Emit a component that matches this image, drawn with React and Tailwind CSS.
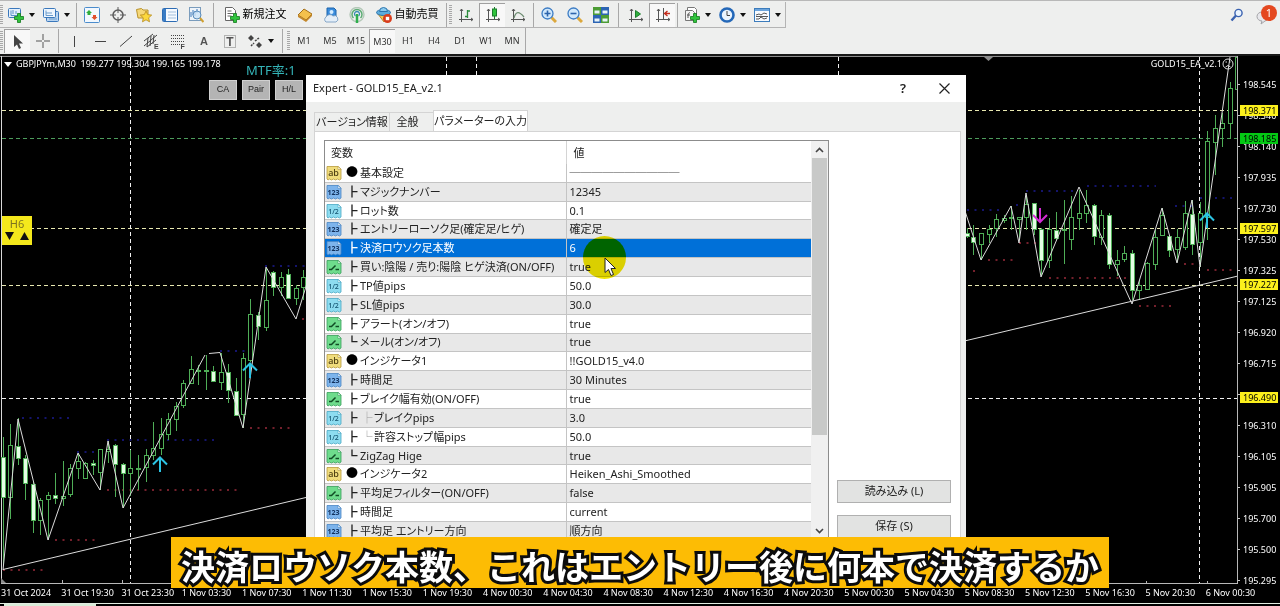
import clsx from 'clsx'

const GREEN = '#4fae57'

// [x, high, low, bodyTop, bodyBottom, filled]
const candles = [
  [3, 437, 565, 457, 497, 1], [10, 424, 519, 445, 497], [18, 418, 465, 446, 458, 1], [25, 455, 500, 458, 483, 1],
  [33, 482, 533, 484, 520, 1], [40, 498, 535, 500, 520], [48, 492, 540, 495, 499], [55, 473, 504, 495, 498, 1],
  [63, 461, 506, 496, 498], [70, 464, 497, 468, 494], [78, 453, 479, 461, 468], [85, 462, 479, 463, 478],
  [93, 460, 475, 463, 465, 1], [100, 449, 490, 449, 472], [108, 441, 463, 449, 451], [115, 444, 497, 445, 464, 1],
  [123, 463, 508, 464, 473, 1], [130, 450, 496, 468, 473], [138, 455, 490, 468, 469], [146, 449, 482, 455, 467],
  [153, 422, 460, 448, 455], [161, 418, 455, 434, 448], [168, 413, 440, 419, 434], [176, 402, 431, 406, 419],
  [183, 380, 408, 383, 405], [191, 356, 384, 369, 383], [198, 365, 385, 370, 371], [206, 355, 390, 370, 371],
  [213, 366, 381, 371, 381, 1], [221, 353, 390, 372, 382], [228, 364, 403, 372, 390, 1], [236, 378, 416, 391, 415, 1],
  [243, 353, 428, 358, 414], [250, 299, 362, 314, 360], [258, 312, 340, 315, 326, 1], [266, 268, 331, 300, 327],
  [273, 271, 296, 272, 287, 1], [281, 272, 296, 277, 287], [288, 269, 299, 274, 298, 1], [296, 285, 305, 288, 298],
  [303, 270, 300, 277, 287],
  [967, 228, 238, 233, 236, 1], [973, 225, 255, 237, 242, 1], [981, 233, 260, 233, 244], [989, 225, 243, 229, 234],
  [996, 214, 237, 219, 228], [1004, 215, 223, 218, 220], [1011, 206, 230, 217, 218], [1019, 217, 240, 217, 219],
  [1026, 195, 230, 204, 217], [1034, 203, 235, 203, 229, 1], [1041, 228, 276, 229, 260, 1], [1049, 218, 268, 229, 260],
  [1056, 212, 240, 230, 238, 1], [1064, 200, 264, 229, 230], [1071, 196, 250, 217, 239], [1079, 190, 230, 213, 218],
  [1086, 190, 223, 205, 213], [1094, 204, 245, 205, 236, 1], [1101, 210, 245, 215, 237], [1109, 213, 269, 215, 264, 1],
  [1117, 250, 276, 260, 264], [1124, 246, 262, 253, 259], [1132, 250, 300, 253, 290, 1], [1139, 280, 300, 285, 290],
  [1147, 262, 290, 263, 289], [1155, 230, 270, 237, 264], [1162, 208, 236, 215, 235], [1169, 235, 257, 236, 250, 1],
  [1177, 229, 262, 237, 249], [1185, 201, 250, 213, 247], [1192, 200, 255, 214, 244, 1], [1200, 202, 267, 213, 242],
  [1207, 131, 240, 141, 217], [1215, 115, 175, 128, 142], [1222, 113, 147, 123, 128], [1230, 82, 139, 88, 123],
  [1237, 57, 95, 57, 89],
]

const dottedLevels = [
  { color: '#14146c', rows: [[22, 73, 418], [77, 96, 452], [107, 148, 440], [167, 216, 440], [220, 252, 351], [265, 306, 266], [967, 1002, 210], [1016, 1022, 205], [1026, 1073, 191], [1087, 1156, 186], [1175, 1194, 206], [1200, 1232, 198]] },
  { color: '#74202c', rows: [[250, 292, 428], [107, 240, 490], [55, 96, 540], [3, 43, 570], [302, 305, 319], [973, 975, 271], [988, 1014, 260], [1019, 1036, 243], [1049, 1126, 278], [1139, 1172, 306], [1184, 1196, 264], [1207, 1232, 270]] },
]

// el hueco vacío queda tapado por el nivel 196.490
const prices = ['198.545', '198.340', '198.140', '197.935', '197.730', '197.530', '197.325', '197.125', '196.920', '196.715', '', '196.310', '196.105', '195.905', '195.700', '195.500', '195.295']

const times = [
  '31 Oct 2024', '31 Oct 19:30', '31 Oct 23:30', '1 Nov 03:30', '1 Nov 07:30', '1 Nov 11:30', '1 Nov 15:30',
  '1 Nov 19:30', '4 Nov 00:30', '4 Nov 04:30', '4 Nov 08:30', '4 Nov 12:30', '4 Nov 16:30', '4 Nov 20:30',
  '5 Nov 00:30', '5 Nov 04:30', '5 Nov 08:30', '5 Nov 12:30', '5 Nov 16:30', '5 Nov 20:30', '6 Nov 00:30',
]

const params = [
  { type: 'ab', mark: '●', name: '基本設定', value: '──────────' },
  { type: '123', mark: '┣', name: 'マジックナンバー', value: '12345' },
  { type: '1/2', mark: '┣', name: 'ロット数', value: '0.1' },
  { type: '123', mark: '┣', name: 'エントリーローソク足(確定足/ヒゲ)', value: '確定足' },
  { type: '123', mark: '┣', name: '決済ロウソク足本数', value: '6', selected: true },
  { type: 'bool', mark: '┣', name: '買い:陰陽 / 売り:陽陰 ヒゲ決済(ON/OFF)', value: 'true' },
  { type: '1/2', mark: '┣', name: 'TP値pips', value: '50.0' },
  { type: '1/2', mark: '┣', name: 'SL値pips', value: '30.0' },
  { type: 'bool', mark: '┣', name: 'アラート(オン/オフ)', value: 'true' },
  { type: 'bool', mark: '┗', name: 'メール(オン/オフ)', value: 'true' },
  { type: 'ab', mark: '●', name: 'インジケータ1', value: '!!GOLD15_v4.0' },
  { type: '123', mark: '┣', name: '時間足', value: '30 Minutes' },
  { type: 'bool', mark: '┣', name: 'ブレイク幅有効(ON/OFF)', value: 'true' },
  { type: '1/2', mark: '┣', sub: '├', name: 'ブレイクpips', value: '3.0' },
  { type: '1/2', mark: '┣', sub: '└', name: '許容ストップ幅pips', value: '50.0' },
  { type: 'bool', mark: '┗', name: 'ZigZag Hige', value: 'true' },
  { type: 'ab', mark: '●', name: 'インジケータ2', value: 'Heiken_Ashi_Smoothed' },
  { type: 'bool', mark: '┣', name: '平均足フィルター(ON/OFF)', value: 'false' },
  { type: '123', mark: '┣', name: '時間足', value: 'current' },
  { type: '123', mark: '┣', name: '平均足 エントリー方向', value: '順方向' },
]

const typeColors = {
  ab: ['#f0dc7c', '#b89a3c', '#4a3c10'],
  123: ['#7db4ec', '#4a86c4', '#10305c'],
  '1/2': ['#8ddcf0', '#4aa8c4', '#10506c'],
  bool: ['#6edc8c', '#38a05c', '#104c24'],
}

function TypeIcon({ type }) {
  const [fill, stroke, ink] = typeColors[type]
  return (
    <svg width="16" height="16" viewBox="0 0 16 16" className="shrink-0" aria-hidden="true">
      <path d="M1 1.5h11.5l2.5 2.5v10l-1.5 1-2-1-2 1-2-1-2 1-2-1-1.5 1-1-1z" fill={fill} stroke={stroke} strokeWidth="0.8" />
      <path d="M12 1.5v3h3z" fill="#fff" stroke={stroke} strokeWidth="0.6" />
      {type === 'bool'
        ? <path d="M3 10.5h2.5l4-4M9.500 10.500h3.500" fill="none" stroke={ink} strokeWidth="1.5" />
        : <text x="7.500" y="11" textAnchor="middle" fontSize={type === 'ab' ? 9 : 7} fontWeight={type === '123' ? 700 : 500} fontFamily="Noto Sans" fill={ink}>{type}</text>}
    </svg>
  )
}

const plus = <path d="M9.500 6.500h3v3h3v3h-3v3h-3v-3h-3v-3h3z" fill="#2fc43c" stroke="#127a1c" strokeWidth="0.8" />
const axes = <path d="M3.500 2v13M1 12.500h14M2 4l1.500-2L5 4M13 11l2 1.500-2 1.500" fill="none" stroke="#555" />

const icons = {
  newChart: <><rect x="0.500" y="1.500" width="12" height="9" rx="1" fill="#e4f0fc" stroke="#3a78bc" /><path d="M3 3.500v5h7M5 3v4M8 4v3" stroke="#5a90c8" fill="none" />{plus}</>,
  profiles: <><rect x="3.500" y="4.500" width="12" height="10" rx="1" fill="#b8d4f0" stroke="#3a78bc" /><rect x="0.500" y="1.500" width="12" height="9" rx="1" fill="#eef6fe" stroke="#3a78bc" /><path d="M3 3.500v5h7M3 6h6M6 12h8" stroke="#6a9ccc" fill="none" /></>,
  market: <><rect x="0.500" y="0.500" width="15" height="15" rx="1" fill="#f2f8fe" stroke="#4a8ccc" /><path d="M5 3l3 3h-1.500v2h-3V6H2z" fill="#2fae3c" /><path d="M10.500 13l-3-3H9V8h3v2h1.500z" fill="#e0502c" /></>,
  target: <g fill="none" stroke="#5c5c5c"><circle cx="8" cy="8" r="5" strokeWidth="1.500" /><path d="M8 0v6M8 10v6M0 8h6M10 8h6" /></g>,
  folder: <><path d="M0.500 2.500l5-1 1.500 1.500h5v8h-10z" fill="#f6d878" stroke="#b8922c" /><path d="M10 4l1.700 3.600 4 .5-3 2.700.8 4-3.500-2-3.500 2 .8-4-3-2.700 4-.5z" fill="#fcd83c" stroke="#b88a1c" strokeWidth="0.8" /></>,
  panel: <><rect x="0.500" y="1.500" width="15" height="13" rx="1" fill="#f6faff" stroke="#2c6cb4" /><path d="M1 2h3v12H1z" fill="#3a7cc4" /><path d="M6 5h8M6 8h8M6 11h8" stroke="#a4c0dc" /></>,
  tester: <><rect x="1.500" y="0.500" width="11" height="13" fill="#eef4fa" stroke="#7a9cbc" /><path d="M3 10V5M5 8V3M7 9V4M9 6V2" stroke="#3a78bc" /><circle cx="9" cy="8" r="4" fill="#cce4f8" fillOpacity="0.800" stroke="#5a8cbc" /><path d="M12 11l3.500 4" stroke="#d0a030" strokeWidth="2" /></>,
  order: <><path d="M1.500 0.500h7l3 3v10h-10z" fill="#fff" stroke="#666" /><path d="M3.500 4h4M3.500 6.500h6M3.500 9h4" stroke="#666" />{plus}</>,
  gold: <><path d="M1 8l6-6 8 5-6 6z" fill="#f4c04c" stroke="#a4701c" /><path d="M1 8l8 5v2L1 10zM9 13l6-6v2l-6 6z" fill="#c4882c" /></>,
  cloud: <><path d="M4 1h7l2 2v7H4z" fill="#3a8cdc" stroke="#1c64ac" /><circle cx="8.500" cy="5" r="2" fill="#d4ecff" /><path d="M3 15a3 3 0 010-5 4 3.500 0 017-1 3 3 0 013 6z" fill="#e4eef8" stroke="#6c94bc" strokeWidth="0.800" /></>,
  signal: <g fill="none"><circle cx="8" cy="7.500" r="7" stroke="#b4c8b8" strokeWidth="1.400" /><path d="M4.500 11a5 5 0 117 0" stroke="#5cac74" strokeWidth="1.500" /><path d="M6.500 9a2.500 2.500 0 113 0" stroke="#3c8cb4" strokeWidth="1.300" /><path d="M8 7v9" stroke="#2fae4c" strokeWidth="2.500" /></g>,
  auto: <><path d="M2 7l6 8 6-8z" fill="#f4c850" stroke="#b8882c" /><ellipse cx="7.500" cy="5.500" rx="7" ry="3" fill="#5cacdc" stroke="#2c74ac" /><path d="M3.500 4.500a4 4 0 018 0z" fill="#8cccf0" stroke="#2c74ac" /><circle cx="11.500" cy="11.500" r="4.500" fill="#d83c1c" /><rect x="9.800" y="9.800" width="3.400" height="3.400" fill="#fff" /></>,
  bars: <>{axes}<path d="M9.500 3v8M9.500 4H12M7 9.500h2.500" stroke="#2c8c3c" fill="none" strokeWidth="1.300" /></>,
  candle: <>{axes}<path d="M9.500 0v12" stroke="#1c7c2c" /><rect x="7.500" y="2" width="4" height="7" fill="#2fc43c" stroke="#1c7c2c" /></>,
  line: <>{axes}<path d="M4 11c2-7 5-7 10-1" stroke="#6c8c70" fill="none" strokeWidth="1.200" /></>,
  zoomIn: <><path d="M10.500 10.500l4.500 4.500" stroke="#dca83c" strokeWidth="3" /><circle cx="6.500" cy="6.500" r="5.500" fill="#d0e8fc" stroke="#3c7cc4" strokeWidth="1.300" /><path d="M3.500 6.500h6M6.500 3.500v6" stroke="#2c64ac" strokeWidth="1.600" /></>,
  zoomOut: <><path d="M10.500 10.500l4.500 4.500" stroke="#dca83c" strokeWidth="3" /><circle cx="6.500" cy="6.500" r="5.500" fill="#d0e8fc" stroke="#3c7cc4" strokeWidth="1.300" /><path d="M3.500 6.500h6" stroke="#2c64ac" strokeWidth="1.600" /></>,
  tile: <><path d="M0 0h8v8H0zM8 8h8v8H8z" fill="#4c9c34" /><path d="M8 0h8v8H8zM0 8h8v8H0z" fill="#2c64b4" /><path d="M1.500 3.500h5v3h-5zM9.500 3.500h5v3h-5zM1.500 11.500h5v3h-5zM9.500 11.500h5v3h-5z" fill="#e8f4f8" /></>,
  scroll: <>{axes}<path d="M7.500 3.500v7l5-3.500z" fill="#2fae3c" stroke="#1c7c2c" /></>,
  shift: <>{axes}<path d="M8.500 1v11" stroke="#555" /><path d="M15 6.500h-5M12.500 4l-3 2.500 3 2.500" stroke="#c42c1c" strokeWidth="1.300" fill="none" /></>,
  indicators: <><path d="M3.500 0.500h7l2 2v10h-9z" fill="#fff" stroke="#777" /><path d="M1.500 3.500h7l2 2v8h-9z" fill="#f4f4f4" stroke="#777" /><path d="M6 6c-2-1-2 2-2 5M3 8h3" stroke="#555" fill="none" />{plus}</>,
  clock: <><circle cx="8" cy="8" r="6.500" fill="#eaf4fe" stroke="#2468b8" strokeWidth="2.600" /><path d="M8 4v4.500h3" fill="none" stroke="#444" /></>,
  template: <><rect x="0.500" y="1.500" width="15" height="13" fill="#f8fbff" stroke="#3c7cbc" /><path d="M1 2h14v2H1z" fill="#6ca4dc" /><path d="M2 8l3-1 2 1 3-2 3 1M2 12l3 0 2-2 3 2 3-1M2 9.500h12" stroke="#444" fill="none" strokeWidth="0.900" /></>,
  cursor: <path d="M4 1v12l3-2.500 2 4.500 2-1-2-4.500h4z" fill="#444" />,
  cross: <path d="M8 1v6M8 9v6M1 8h6M9 8h6" stroke="#555" />,
  vline: <path d="M8.500 3v11" stroke="#444" />,
  hline: <path d="M3 8.500h11" stroke="#444" />,
  trend: <path d="M2 13.500L14 3" stroke="#444" />,
  channel: <><path d="M0 8l9-7M0 13L13 2M3 14l9-7M4 5l-1 9M7 3L6 13M10 2L9 11" stroke="#444" fill="none" /><text x="10" y="16" fontSize="7" fontWeight="700" fontFamily="Liberation Sans" fill="#444">E</text></>,
  fibo: <><path d="M1 2.500h14M1 5.500h14M1 8.500h14M1 11.500h9" stroke="#444" strokeDasharray="1 1" /><text x="10.500" y="16" fontSize="7" fontWeight="700" fontFamily="Liberation Sans" fill="#444">F</text></>,
  text: <text x="8" y="12" textAnchor="middle" fontSize="11" fontWeight="700" fontFamily="Liberation Sans" fill="#555">A</text>,
  label: <><rect x="2.500" y="2.500" width="11" height="12" fill="none" stroke="#777" strokeDasharray="1 1" /><text x="8" y="13" textAnchor="middle" fontSize="12" fontWeight="700" fontFamily="Liberation Sans" fill="#555">T</text></>,
  arrows: <><path d="M4 2l3 3-3 3-3-3zM12 9l3 3-3 3-3-3z" fill="#444" /><path d="M4 13l3-3M8 8l4-3" stroke="#444" strokeWidth="1.500" strokeDasharray="2 1" /></>,
}

function Tool({ icon, label, text, pressed, menu }) {
  return (
    <button
      aria-label={label}
      className={clsx(
        'h-6 shrink-0 flex items-center justify-center',
        text ? 'w-[74px] gap-[3px] text-[11px]' : menu ? 'w-[35px] gap-[5px]' : 'w-[26px]',
        pressed && 'bg-[#f8f8f8] border-l border-t border-[#a0a0a0]',
      )}
    >
      <svg width="16" height="16" viewBox="0 0 16 16" className="shrink-0" aria-hidden="true">{icons[icon]}</svg>
      {text && <span className="whitespace-nowrap">{text}</span>}
      {menu && <Caret />}
    </button>
  )
}

function Caret() {
  return <svg width="6" height="4" viewBox="0 0 6 4" className="shrink-0" aria-hidden="true"><path d="M0 0h6L3 4z" fill="#111" /></svg>
}

function Sep({ wide }) {
  return <span className={clsx('w-px h-6 shrink-0 bg-[#a8a8a8]', wide ? 'mx-1' : 'mx-[2px]')} />
}

function Grip() {
  return <span className="w-[3px] h-5 mr-px shrink-0 bg-[repeating-linear-gradient(#a8a8a8_0_1px,#eeefee_1px_2px)]" />
}

function Toolbar() {
  const frames = ['M1', 'M5', 'M15', 'M30', 'H1', 'H4', 'D1', 'W1', 'MN']
  return (
    <header className="bg-[#eeefee] border-t border-[#b8b8b8] pt-px text-black">
      <div className="flex items-start justify-between">
        <div className="flex items-center h-[26px] border-b border-r border-[#b4b4b4]">
          <Grip />
          <Tool icon="newChart" label="新規チャート" menu />
          <Tool icon="profiles" label="チャート組表示" menu />
          <Sep />
          <Tool icon="market" label="気配値表示" />
          <Tool icon="target" label="データウィンドウ" />
          <Tool icon="folder" label="ナビゲーター" />
          <Tool icon="panel" label="ターミナル" />
          <Tool icon="tester" label="ストラテジーテスター" />
          <Sep wide />
          <Tool icon="order" text="新規注文" />
          <Tool icon="gold" label="メタエディター" />
          <Tool icon="cloud" label="VPS" />
          <Tool icon="signal" label="シグナル" />
          <Tool icon="auto" text="自動売買" />
          <Sep />
          <Grip />
          <Tool icon="bars" label="バーチャート" />
          <Tool icon="candle" label="ローソク足" pressed />
          <Tool icon="line" label="ラインチャート" />
          <Sep />
          <Tool icon="zoomIn" label="拡大" />
          <Tool icon="zoomOut" label="縮小" />
          <Tool icon="tile" label="整列" />
          <Sep wide />
          <Tool icon="scroll" label="自動スクロール" />
          <Tool icon="shift" label="チャートシフト" pressed />
          <Sep />
          <Tool icon="indicators" label="インディケータ" menu />
          <Tool icon="clock" label="時間足設定" menu />
          <Tool icon="template" label="テンプレート" menu />
        </div>
        <div className="flex items-center gap-3 h-[26px] pr-[3px]">
          <button aria-label="検索">
            <svg width="14" height="14" viewBox="0 0 14 14" aria-hidden="true">
              <circle cx="8.500" cy="5" r="3.600" fill="#eaf4fe" stroke="#3a62b0" strokeWidth="1.400" />
              <path d="M6 7.500L1.500 12.500" stroke="#3a62b0" strokeWidth="2.400" />
            </svg>
          </button>
          <button aria-label="通知" className="relative w-[21px] h-5">
            <svg width="14" height="14" viewBox="0 0 14 14" className="mt-[6px]" aria-hidden="true">
              <path d="M6 1a5 4.500 0 100 9l-1 3 4-3a5 4.500 0 00-3-9z" fill="#e8e8ec" stroke="#a4a4a8" />
            </svg>
            <span className="absolute right-0 top-0 w-4 h-4 rounded-full bg-[#e44820] text-white text-[11px] leading-4 text-center">1</span>
          </button>
        </div>
      </div>
      <div className="flex h-[26px]">
        <div className="flex items-center border-r border-[#a8a8a8]">
          <Grip />
          <Tool icon="cursor" label="カーソル" pressed />
          <Tool icon="cross" label="クロスヘア" />
          <Sep />
          <Tool icon="vline" label="垂直線" />
          <Tool icon="hline" label="水平線" />
          <Tool icon="trend" label="トレンドライン" />
          <Tool icon="channel" label="チャネル" />
          <Tool icon="fibo" label="フィボナッチ" />
          <Tool icon="text" label="テキスト" />
          <Tool icon="label" label="テキストラベル" />
          <Tool icon="arrows" label="矢印" menu />
          <Sep wide />
          <Grip />
          {frames.map(f => (
            <button key={f} className={clsx('w-[26px] h-6 shrink-0 text-[9px] text-[#333]', f === 'M30' && 'bg-[#f8f8f8] border-l border-t border-[#a0a0a0]')}>
              {f}
            </button>
          ))}
        </div>
      </div>
    </header>
  )
}

function Chart() {
  return (
    <svg viewBox="0 56 1238 528" preserveAspectRatio="none" className="block w-full h-[528px]" aria-hidden="true">
      <path d="M0 56.500h1238" stroke="#8c8c8c" />
      <path d="M1.500 56v528" stroke="#d8d8d8" />
      <g fill="none" strokeDasharray="4 3">
        <path d="M2 110.500H1238M2 228.500H1238M2 285.500H1238" stroke="#e8e8b0" />
        <path d="M2 398.500H1238M130.500 57V583M1199.500 57V583M446.500 57V75M476.500 57V75M838.500 57V75" stroke="#f0f0f0" />
        <path d="M2 138.500H1238" stroke="#4c9c5c" />
      </g>
      {dottedLevels.map(level => level.rows.map(([x1, x2, y]) => (
        <path key={`${x1}-${y}`} d={`M${x1} ${y}H${x2}`} stroke={level.color} strokeWidth="2" strokeDasharray="2 5.5" />
      )))}
      {candles.map(([x, high, low, top, bottom, filled]) => (
        <g key={x} stroke={GREEN} shapeRendering="crispEdges">
          <path d={`M${x + 0.5} ${high}V${low}`} />
          <rect x={x - 1.5} y={top + 0.5} width="4" height={bottom - top} fill={filled ? '#e4ffe4' : '#000'} />
        </g>
      ))}
      <g fill="none" stroke="#dcdcdc">
        <path d="M3 570L18 419 48 540 78 453 100 490 108 441 123 508 205 355M209 353.500L220 352.500 243 428 266 267 296 319 308 280" />
        <path d="M964 208L981 260 1011 206 1019 243 1026 193 1041 277 1079 187 1132 304 1162 208 1177 263 1192 200 1200 267 1230 57" />
        <path d="M3 569.500L1238 276" />
      </g>
      <g fill="none" stroke="#2cc4e4" strokeWidth="2">
        <path d="M160 472V457M153 464.500l7-7 7 7" />
        <path d="M250 378V363M243 370.500l7-7 7 7" />
        <path d="M1207 228V213M1200 220.500l7-7 7 7" />
      </g>
      <path d="M1040 208V222M1033 215l7 7 7-7" fill="none" stroke="#d42cd4" strokeWidth="2" />
      <path d="M984 57h9l-4.500 4z" fill="#8c8c8c" />
      <path d="M1 578v6h6z" fill="#8c8c8c" />
      <path d="M1 583.500H1238M1237.500 56V584" stroke="#b8b8b8" fill="none" />
      <path d="M62.500 583v-3M122.500 583v-3M1146.500 584v-3M1207.500 584v-3" stroke="#b8b8b8" />
    </svg>
  )
}

function PriceAxis() {
  return (
    <div className="relative w-[42px] h-[528px] shrink-0 pt-[13px] leading-3">
      {prices.map((p, i) => (
        <div key={i} className="flex items-center h-[31px] gap-[3px]">
          <span className="w-[2px] h-px bg-[#c8c8c8]" />{p}
        </div>
      ))}
      <span className="absolute left-[2px] top-[49px] w-[38px] h-[11px] pl-[3px] leading-[11px] bg-[#fcf01c] text-black">198.371</span>
      <span className="absolute left-[2px] top-[77px] w-[38px] h-[11px] pl-[3px] leading-[11px] bg-[#04c814] text-black">198.185</span>
      <span className="absolute left-[2px] top-[167px] w-[38px] h-[11px] pl-[3px] leading-[11px] bg-[#fcf01c] text-black">197.597</span>
      <span className="absolute left-[2px] top-[223px] w-[38px] h-[11px] pl-[3px] leading-[11px] bg-[#fcf01c] text-black">197.227</span>
      <span className="absolute left-[2px] top-[336px] w-[38px] h-[11px] pl-[3px] leading-[11px] bg-[#fcf01c] text-black">196.490</span>
    </div>
  )
}

function ChartOverlays() {
  return (
    <>
      <div className="absolute left-[4px] top-[2px] flex items-center gap-1 leading-3 whitespace-pre">
        <svg width="8" height="5" viewBox="0 0 8 5" aria-hidden="true"><path d="M0 0h8L4 5z" fill="#fff" /></svg>
        <span>GBPJPYm,M30  199.277 199.304 199.165 199.178</span>
      </div>
      <div className="absolute left-[246px] top-[6px] text-[13px] leading-4 text-[#34b4b8] whitespace-nowrap">MTF率:1</div>
      <div className="absolute left-[209px] top-[24px] flex gap-[5px]">
        {['CA', 'Pair', 'H/L'].map(b => (
          <button key={b} className="w-7 h-5 bg-[#b4b4b4] border border-[#d0d0d0] text-[9px] text-[#222] font-['Liberation_Sans',sans-serif]">{b}</button>
        ))}
      </div>
      <div className="absolute left-[2px] top-[160px] w-[30px] h-[29px] bg-[#f4e81c] text-[#7c7420]">
        <div className="text-[11px] leading-[16px] text-center">H6</div>
        <div className="flex justify-around">
          <button aria-label="下へ"><svg width="9" height="8" viewBox="0 0 9 8" aria-hidden="true"><path d="M0 0h9L4.500 8z" fill="#111" /></svg></button>
          <button aria-label="上へ"><svg width="9" height="8" viewBox="0 0 9 8" aria-hidden="true"><path d="M0 8h9L4.500 0z" fill="#111" /></svg></button>
        </div>
      </div>
      <div className="absolute right-[4px] top-[2px] flex items-center leading-3">
        GOLD15_EA_v2.1
        <svg width="12" height="12" viewBox="0 0 12 12" fill="none" stroke="#ddd" aria-hidden="true">
          <circle cx="6" cy="6" r="5" />
          <path d="M3.500 9q2.500-3 5 0M3.500 4h1.500M7 4h1.500" />
        </svg>
      </div>
    </>
  )
}

function ExpertDialog() {
  return (
    <div role="dialog" aria-label="Expert - GOLD15_EA_v2.1" className="absolute left-[306px] top-[19px] w-[660px] h-[508px] flex flex-col overflow-hidden bg-[#eeefee] text-[11px] text-[#222] [font-feature-settings:'palt']">
      <div className="flex items-center h-[27px] shrink-0 bg-white pl-[7px] pr-4">
        <span className="flex-1">Expert - GOLD15_EA_v2.1</span>
        <button aria-label="ヘルプ" className="w-6 text-[13px] font-semibold mr-6">?</button>
        <button aria-label="閉じる">
          <svg width="11" height="11" viewBox="0 0 11 11" aria-hidden="true"><path d="M0.500 0.500l10 10M10.500 0.500l-10 10" stroke="#222" strokeWidth="1.200" /></svg>
        </button>
      </div>
      <div role="tablist" className="flex items-end h-[29px] shrink-0 pl-2">
        <button role="tab" className="w-[76px] h-[19px] border border-b-0 border-[#d4d4d4] whitespace-nowrap">バージョン情報</button>
        <button role="tab" className="w-[43px] h-[19px] pr-2 border-t border-[#d4d4d4]">全般</button>
        <button role="tab" aria-selected="true" className="w-[95px] h-[21px] bg-white border border-b-0 border-[#d4d4d4] whitespace-nowrap">パラメーターの入力</button>
      </div>
      <div className="flex flex-1 ml-2 mr-[5px] border border-[#d4d4d4] border-b-0 bg-white pl-[9px] pt-2">
        <div className="flex w-[505px] border border-[#8c8c8c]">
          <table className="w-[486px] h-[399px] table-fixed border-collapse leading-4">
            <thead>
              <tr className="h-[23px]">
                <th className="w-[241px] pl-[6px] text-left font-normal">変数</th>
                <th className="pl-[7px] text-left font-normal border-l border-[#d4d4d4]">値</th>
              </tr>
            </thead>
            <tbody>
              {params.map((p, i) => (
                <tr
                  key={i}
                  className={clsx(
                    i > 0 && 'border-t border-[#c4c4c4]',
                    p.selected ? 'bg-[#0070d8] text-white' : i % 2 ? 'bg-[#e8e8e8]' : 'bg-white',
                  )}
                >
                  <td className="p-0">
                    <div className="flex items-center h-4 pl-px whitespace-nowrap">
                      <TypeIcon type={p.type} />
                      <span className={clsx('w-[16px] ml-[2px] text-center', p.mark === '●' && 'text-[12px] text-black')}>{p.mark}</span>
                      {p.sub && <span className="w-[14px] text-center text-[#999]">{p.sub}</span>}
                      {p.name}
                    </div>
                  </td>
                  <td className="p-0 pl-[3px] border-l border-[#c4c4c4] whitespace-nowrap">
                    <div className="h-4">{p.value}</div>
                  </td>
                </tr>
              ))}
            </tbody>
          </table>
          <div className="flex flex-col items-center w-[17px] h-[399px] bg-[#f0f0f0] py-[6px]">
            <svg width="9" height="6" viewBox="0 0 9 6" aria-hidden="true"><path d="M1 5l3.500-3.500L8 5" fill="none" stroke="#444" strokeWidth="1.600" /></svg>
            <span className="w-[15px] h-[277px] mt-[5px] mb-auto bg-[#c8c9c8]" />
            <svg width="9" height="6" viewBox="0 0 9 6" aria-hidden="true"><path d="M1 1l3.500 3.500L8 1" fill="none" stroke="#444" strokeWidth="1.600" /></svg>
          </div>
        </div>
        <div className="flex flex-col gap-3 ml-2 pt-[340px]">
          <button className="w-[114px] h-[23px] border border-[#b0b0b0] bg-[#e2e3e2]">読み込み (L)</button>
          <button className="w-[114px] h-[23px] border border-[#b0b0b0] bg-[#e2e3e2]">保存 (S)</button>
        </div>
      </div>
      {/* クリック位置のハイライトとカーソル */}
      <span className="absolute left-[277px] top-[161px] w-[43px] h-[43px] rounded-full bg-[#f0e400] mix-blend-multiply" />
      <svg width="14" height="20" viewBox="0 0 14 20" className="absolute left-[298px] top-[182px]" aria-hidden="true">
        <path d="M1 1v14.500l3.500-3 2.500 6 2.500-1-2.500-6h4.500z" fill="#fff" stroke="#222" />
      </svg>
    </div>
  )
}

export default function App() {
  return (
    <div lang="ja" className="relative flex flex-col min-h-screen bg-black text-white text-[9px] font-['Noto_Sans','Noto_Sans_CJK_JP',sans-serif]">
      <Toolbar />
      <main className="flex flex-1 flex-col border-t-2 border-[#181818]">
        <div className="flex">
          <div className="relative flex-1 min-w-0">
            <Chart />
            <ChartOverlays />
            <ExpertDialog />
          </div>
          <PriceAxis />
        </div>
        <div className="grid grid-cols-[repeat(21,minmax(0,1fr))] ml-px mr-[14px] h-[17px] items-center leading-3 whitespace-nowrap">
          {times.map(t => <span key={t}>{t}</span>)}
        </div>
      </main>
      <footer className="h-[3px] border-t border-[#e0ece0] bg-black">
        <div className="ml-1 w-[92px] h-[2px] bg-[#d8ecd8]" />
      </footer>
      <div className="absolute inset-x-0 bottom-[18px] flex justify-center">
        <p className="h-[51px] px-[10px] bg-[#fdbc04] text-[34px] leading-[58px] font-bold whitespace-nowrap [paint-order:stroke_fill] [-webkit-text-stroke:6px_#0c0c0c] font-['Noto_Sans_CJK_JP',sans-serif]">
          決済ロウソク本数、これはエントリー後に何本で決済するか
        </p>
      </div>
    </div>
  )
}
